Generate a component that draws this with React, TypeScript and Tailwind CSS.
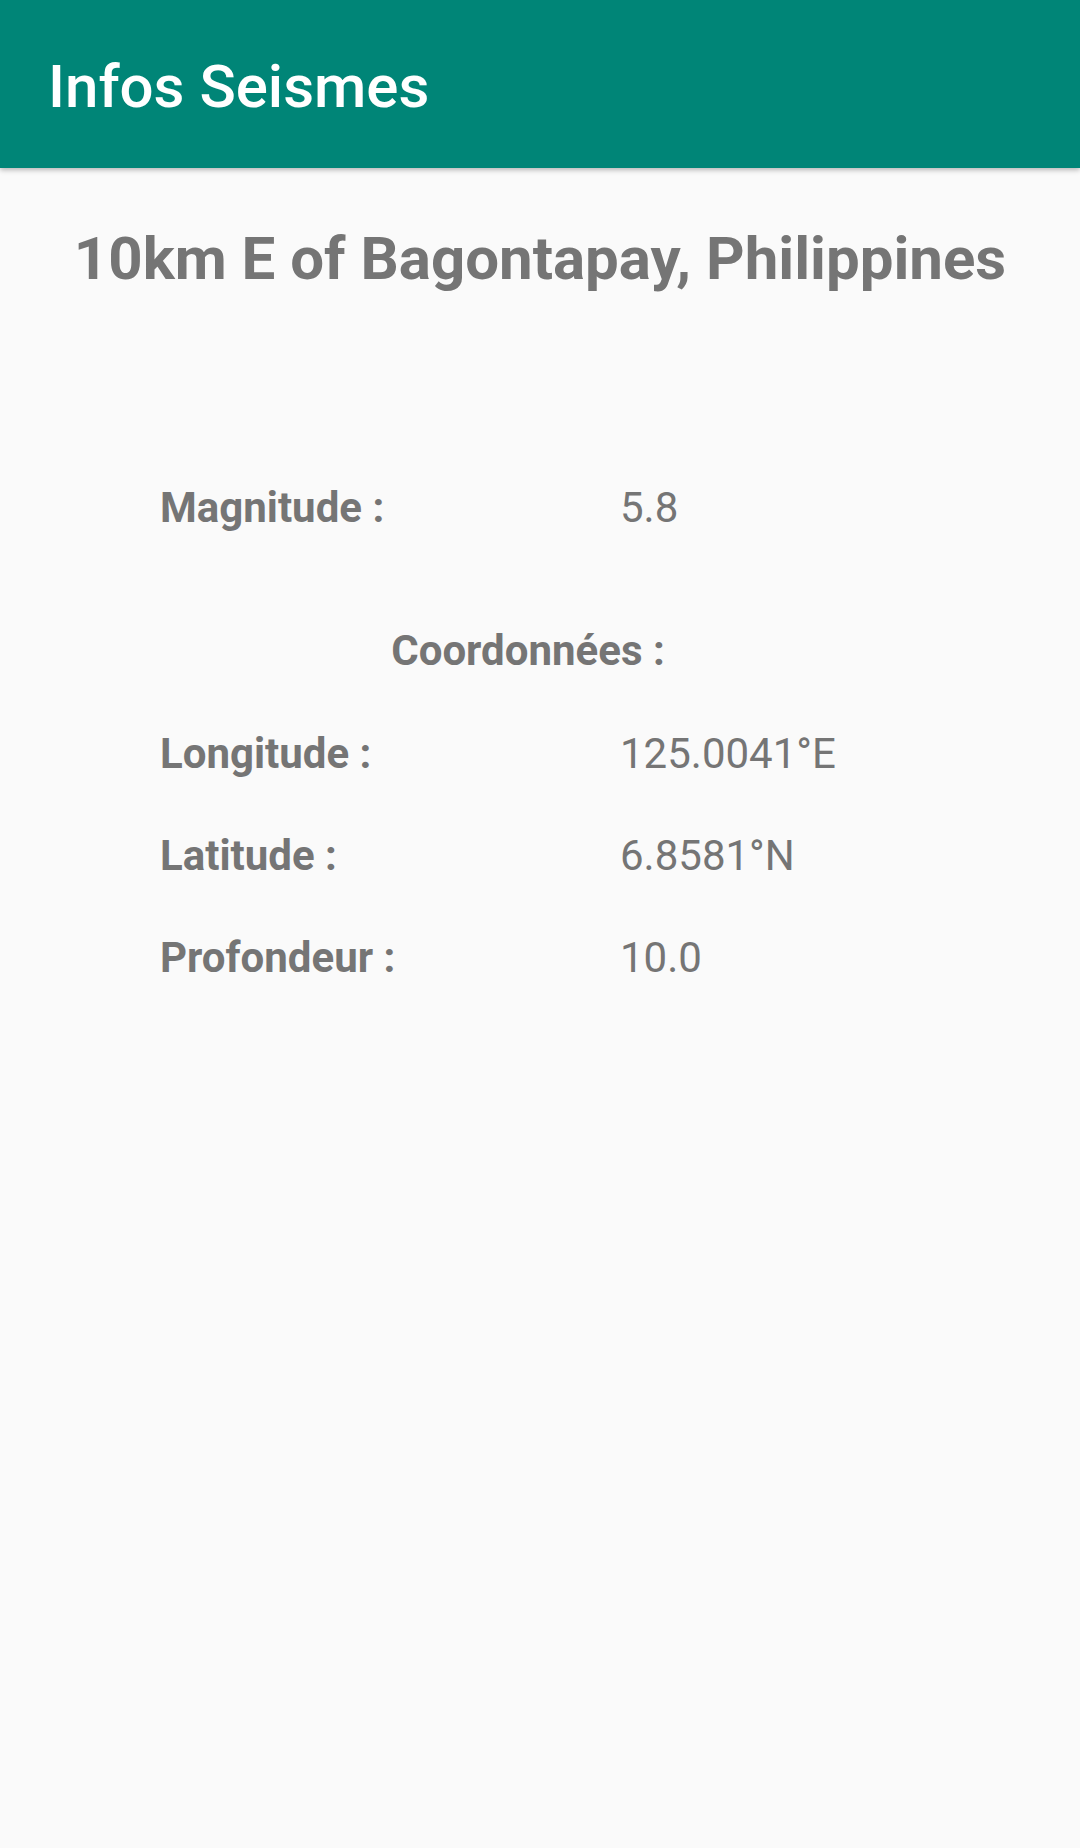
import React from "react";

const rows = [
  { label: "Longitude :", value: "125.0041°E" },
  { label: "Latitude :", value: "6.8581°N" },
  { label: "Profondeur :", value: "10.0" },
];

export default function App() {
  return (
    <div
      className="w-[1080px] h-[1848px] bg-[#fafafa] flex flex-col overflow-hidden"
      style={{ fontFamily: "Roboto, 'Noto Sans', sans-serif" }}
    >
      <header className="relative z-10 h-[168px] shrink-0 bg-[#008577] pt-[52px] pl-[48px] shadow-[0_2px_5px_rgba(0,0,0,0.28)]">
        <h1 className="text-[60px] leading-[70px] font-medium text-white">Infos Seismes</h1>
      </header>

      <main className="flex flex-col text-[#757575]">
        <h2 className="mt-[56px] text-center text-[60px] leading-[70px] font-bold">
          10km E of Bagontapay, Philippines
        </h2>

        <div className="mt-[189px] ml-[160px] w-[736px] flex flex-col">
          <div className="grid grid-cols-[460px_1fr] text-[42px] leading-[49px]">
            <span className="font-bold">Magnitude :</span>
            <span>5.8</span>
          </div>

          <div className="mt-[94px] text-center text-[42px] leading-[49px] font-bold">Coordonnées :</div>

          <div className="mt-[54px] flex flex-col gap-[53px]">
            {rows.map((r) => (
              <div key={r.label} className="grid grid-cols-[460px_1fr] text-[42px] leading-[49px]">
                <span className="font-bold">{r.label}</span>
                <span>{r.value}</span>
              </div>
            ))}
          </div>
        </div>
      </main>
    </div>
  );
}
